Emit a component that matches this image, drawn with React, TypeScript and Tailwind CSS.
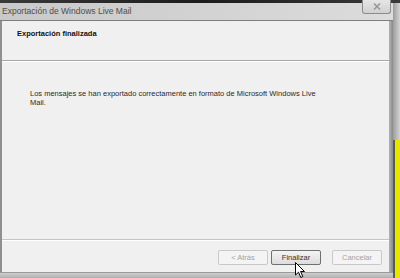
import React from 'react';

const font = { fontFamily: '"Liberation Sans", Arial, sans-serif' };

const Cursor = () => (
  <svg width="11" height="17" viewBox="0 0 11 17" className="absolute left-[23px] top-[11px]">
    <path d="M0.5 0.5 L0.5 13 L3.5 10.2 L5.8 15.5 L7.8 14.6 L5.6 9.5 L9.5 9.5 Z" fill="#fff" stroke="#000" strokeWidth="1" strokeLinejoin="round" />
  </svg>
);

const Button: React.FC<{ label: string; disabled?: boolean; cursor?: boolean; className?: string }> = ({ label, disabled, cursor, className }) => (
  <div
    className={
      'relative w-[50px] h-[15px] rounded-[2px] flex items-center justify-center text-[7.5px] ' +
      (disabled
        ? 'border border-[#c9c9c9] bg-[#f4f4f4] text-[#a3a3a3] '
        : 'border border-[#707070] bg-gradient-to-b from-[#f4f4f4] to-[#dcdcdc] text-[#333] ') +
      (className ?? '')
    }
  >
    {label}
    {cursor && <Cursor />}
  </div>
);

export default function App() {
  return (
    <div className="w-[400px] h-[278px] overflow-hidden bg-[#2b2b2b] flex flex-col" style={font}>
      <div className="h-[3px] bg-gradient-to-r from-[#3a3a3a] via-[#1c1c1c] to-[#3a3a3a]" />
      <div className="flex-1 flex">
        {/* window */}
        <div className="w-[393px] flex flex-col bg-[#b9b9b9]">
          <div className="relative h-[17px] bg-gradient-to-r from-[#c9c9c9] via-[#d2d2d2] to-[#dcdcdc] flex items-center pl-[2px]">
            <span className="text-[8.5px] text-[#4d4d4d] leading-none">Exportación de Windows Live Mail</span>
            <div className="absolute right-[2px] top-[-3px] w-[29px] h-[14px] rounded-b-[3px] border border-[#8c8c8c] border-t-0 bg-gradient-to-b from-[#e6e6e6] to-[#d0d0d0] flex items-center justify-center">
              <svg width="8" height="7" viewBox="0 0 8 7">
                <path d="M1 0.5 L7 6.5 M7 0.5 L1 6.5" stroke="#9a9a9a" strokeWidth="1.6" />
              </svg>
            </div>
          </div>
          <div className="flex-1 flex border-t border-[#7e7e7e]">
            <div className="w-[2px] bg-[#8f8f8f]" />
            <div className="flex-1 flex flex-col bg-[#f0f0f0]">
              <div className="h-[39px] pl-[15px] pt-[8px] text-[7.5px] leading-[9px] font-bold text-[#111]">
                Exportación finalizada
              </div>
              <div className="h-[2px] border-t border-[#a6a6a6] border-b border-b-white" />
              <div className="h-[177px] pl-[28px] pt-[27px] pr-[70px] text-[7.5px] leading-[9px] text-[#2a2a2a]">
                Los mensajes se han exportado correctamente en formato de Microsoft Windows Live Mail.
              </div>
              <div className="h-[2px] border-t border-[#c4c4c4] border-b border-b-white" />
              <div className="flex justify-end pt-[9px] pr-[7px]">
                <Button label="< Atrás" disabled />
                <Button label="Finalizar" cursor className="ml-[3px]" />
                <Button label="Cancelar" disabled className="ml-[11px]" />
              </div>
            </div>
            <div className="w-[4px] bg-gradient-to-r from-[#b4b4b4] to-[#8a8a8a]" />
          </div>
          <div className="h-[6px] border-t border-[#9a9a9a] bg-gradient-to-b from-[#cfcfcf] to-[#b0b0b0]" />
        </div>
        {/* desktop behind */}
        <div className="w-[7px] flex flex-col">
          <div className="h-[137px] bg-gradient-to-r from-[#9d9d9d] to-[#d4d4d4]" />
          <div className="flex-1 flex">
            <div className="w-[2px] bg-[#5a5a5a]" />
            <div className="flex-1 bg-[#e6e600]" />
          </div>
        </div>
      </div>
    </div>
  );
}
